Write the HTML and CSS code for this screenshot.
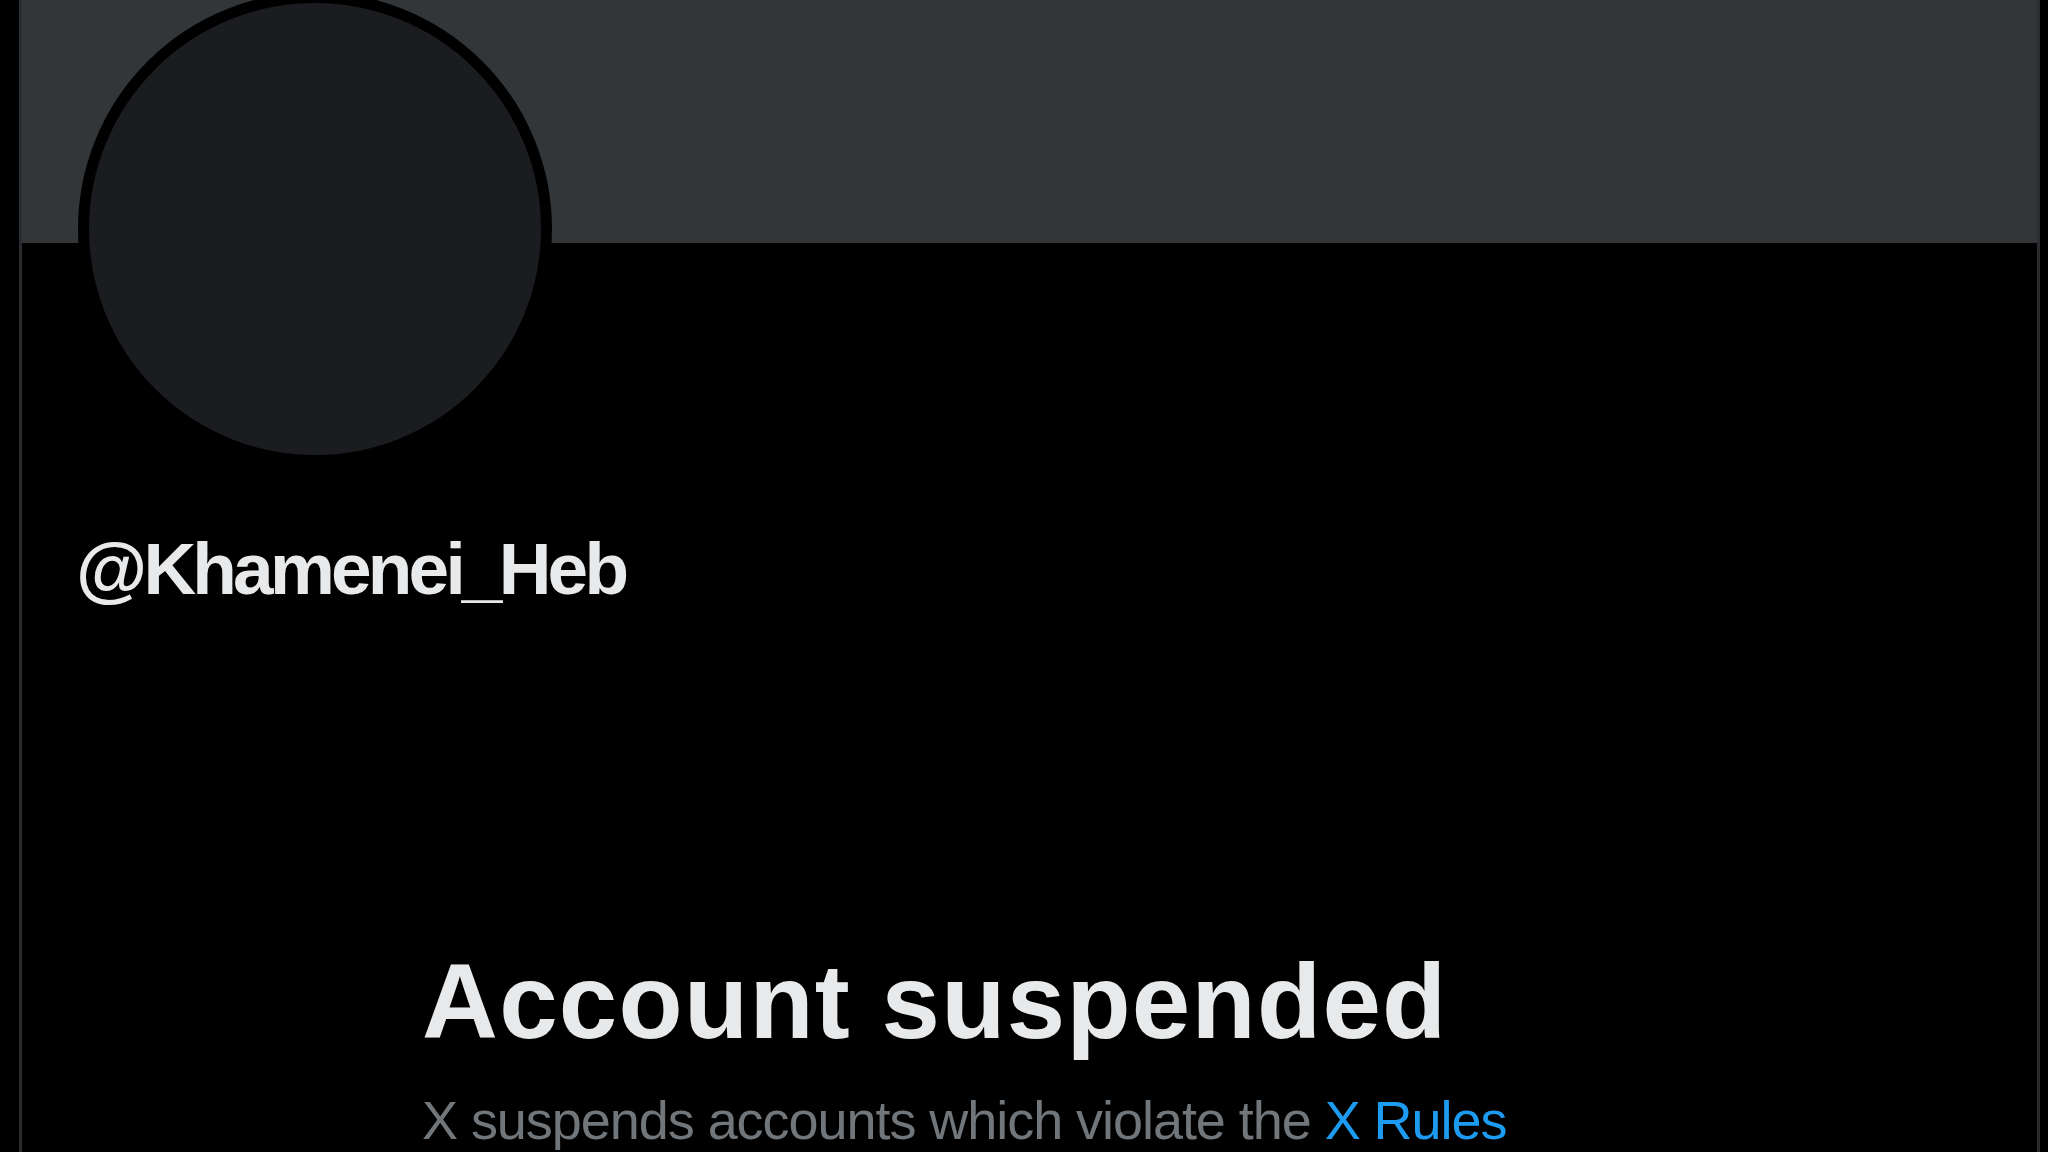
FILE: index.html
```html
<!DOCTYPE html>
<html lang="en">
<head>
<meta charset="utf-8">
<title>@Khamenei_Heb / X</title>
<link rel="stylesheet" href="styles.css">
</head>
<body>
<div class="page">
  <main class="column">
    <div class="header">
      <div class="banner"></div>
      <div class="avatar"></div>
    </div>
    <div class="profile">
      <div class="handle">@Khamenei_Heb</div>
    </div>
    <section class="notice">
      <h1 class="notice-title">Account suspended</h1>
      <p class="notice-text">X suspends accounts which violate the <a class="link" href="#">X Rules</a></p>
    </section>
  </main>
</div>
</body>
</html>
```
FILE: styles.css
```css
html, body {
  margin: 0;
  padding: 0;
  background: #000;
  height: 100%;
  overflow: hidden;
}
body {
  font-family: "Liberation Sans", Arial, sans-serif;
  color: #e7e9ea;
}
.page {
  display: flex;
  height: 1152px;
  padding-left: 19px;
}
.column {
  width: 2015px;
  border-left: 3px solid #2a2c2f;
  border-right: 3px solid #2a2c2f;
  display: flex;
  flex-direction: column;
}
.header {
  position: relative;
}
.banner {
  height: 243px;
  background: #333639;
}
.avatar {
  position: absolute;
  left: 56px;
  top: -8px;
  width: 452px;
  height: 452px;
  border-radius: 50%;
  background: #1b1c1f;
  border: 11px solid #000;
}
.profile {
  padding: 289px 0 0 54px;
}
.handle {
  font-size: 73px;
  line-height: 73px;
  font-weight: 700;
  letter-spacing: -3.8px;
}
.notice {
  padding: 344px 0 0 400px;
}
.notice-title {
  margin: 0;
  font-size: 105px;
  line-height: 105px;
  font-weight: 700;
  letter-spacing: 1.3px;
}
.notice-text {
  margin: 39px 0 0;
  font-size: 54px;
  line-height: 54px;
  color: #71767b;
  letter-spacing: -1.05px;
}
.link {
  color: #1d9bf0;
  text-decoration: none;
}
```
